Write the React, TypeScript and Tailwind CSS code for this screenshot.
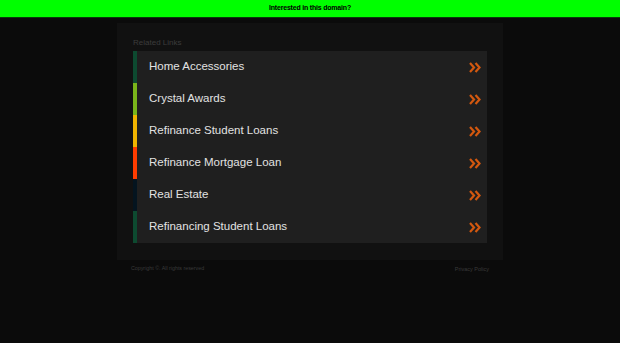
import React from "react";

const items = [
  { label: "Home Accessories", bar: "bg-[#0d4a30]" },
  { label: "Crystal Awards", bar: "bg-[#79b51a]" },
  { label: "Refinance Student Loans", bar: "bg-[#f0b400]" },
  { label: "Refinance Mortgage Loan", bar: "bg-[#ff3c00]" },
  { label: "Real Estate", bar: "bg-[#04141f]" },
  { label: "Refinancing Student Loans", bar: "bg-[#0d4a30]" },
];

function Arrows() {
  return (
    <svg width="12" height="11" viewBox="0 0 12 11" className="shrink-0">
      <path d="M1 1 L5 5.5 L1 10" fill="none" stroke="#d3580f" strokeWidth="2.2" />
      <path d="M6.5 1 L10.5 5.5 L6.5 10" fill="none" stroke="#d3580f" strokeWidth="2.2" />
    </svg>
  );
}

export default function App() {
  return (
    <div className="w-[620px] h-[343px] bg-[#0b0b0b] font-['Liberation_Sans',Arial,sans-serif]">
      <div className="h-[18px] bg-[#00ff00] border-b border-[#0a3a0a] flex items-center justify-center">
        <span className="text-[7px] font-bold text-black tracking-[-0.2px]">Interested in this domain?</span>
      </div>
      <div className="w-[386px] ml-[117px] mt-[5px] bg-[#111111] pt-[15px] pb-[17px] px-[16px]">
        <div className="text-[8px] text-[#3c3c3c] leading-[10px] mb-[3px]">Related Links</div>
        <div className="flex flex-col">
          {items.map((it) => (
            <div key={it.label} className="h-[32px] flex items-stretch bg-[#1f1f1f]">
              <div className={`w-[4px] ${it.bar}`} />
              <div className="flex-1 flex items-center justify-between pl-[12px] pr-[6px]">
                <span className="text-[11.5px] text-[#e2e2e2]">{it.label}</span>
                <Arrows />
              </div>
            </div>
          ))}
        </div>
      </div>
      <div className="w-[386px] ml-[117px] flex justify-between px-[14px] pt-[5px]">
        <span className="text-[5.3px] text-[#3a3a3a]">Copyright ©. All rights reserved</span>
        <span className="text-[5.5px] text-[#3a3a3a]">Privacy Policy</span>
      </div>
    </div>
  );
}
